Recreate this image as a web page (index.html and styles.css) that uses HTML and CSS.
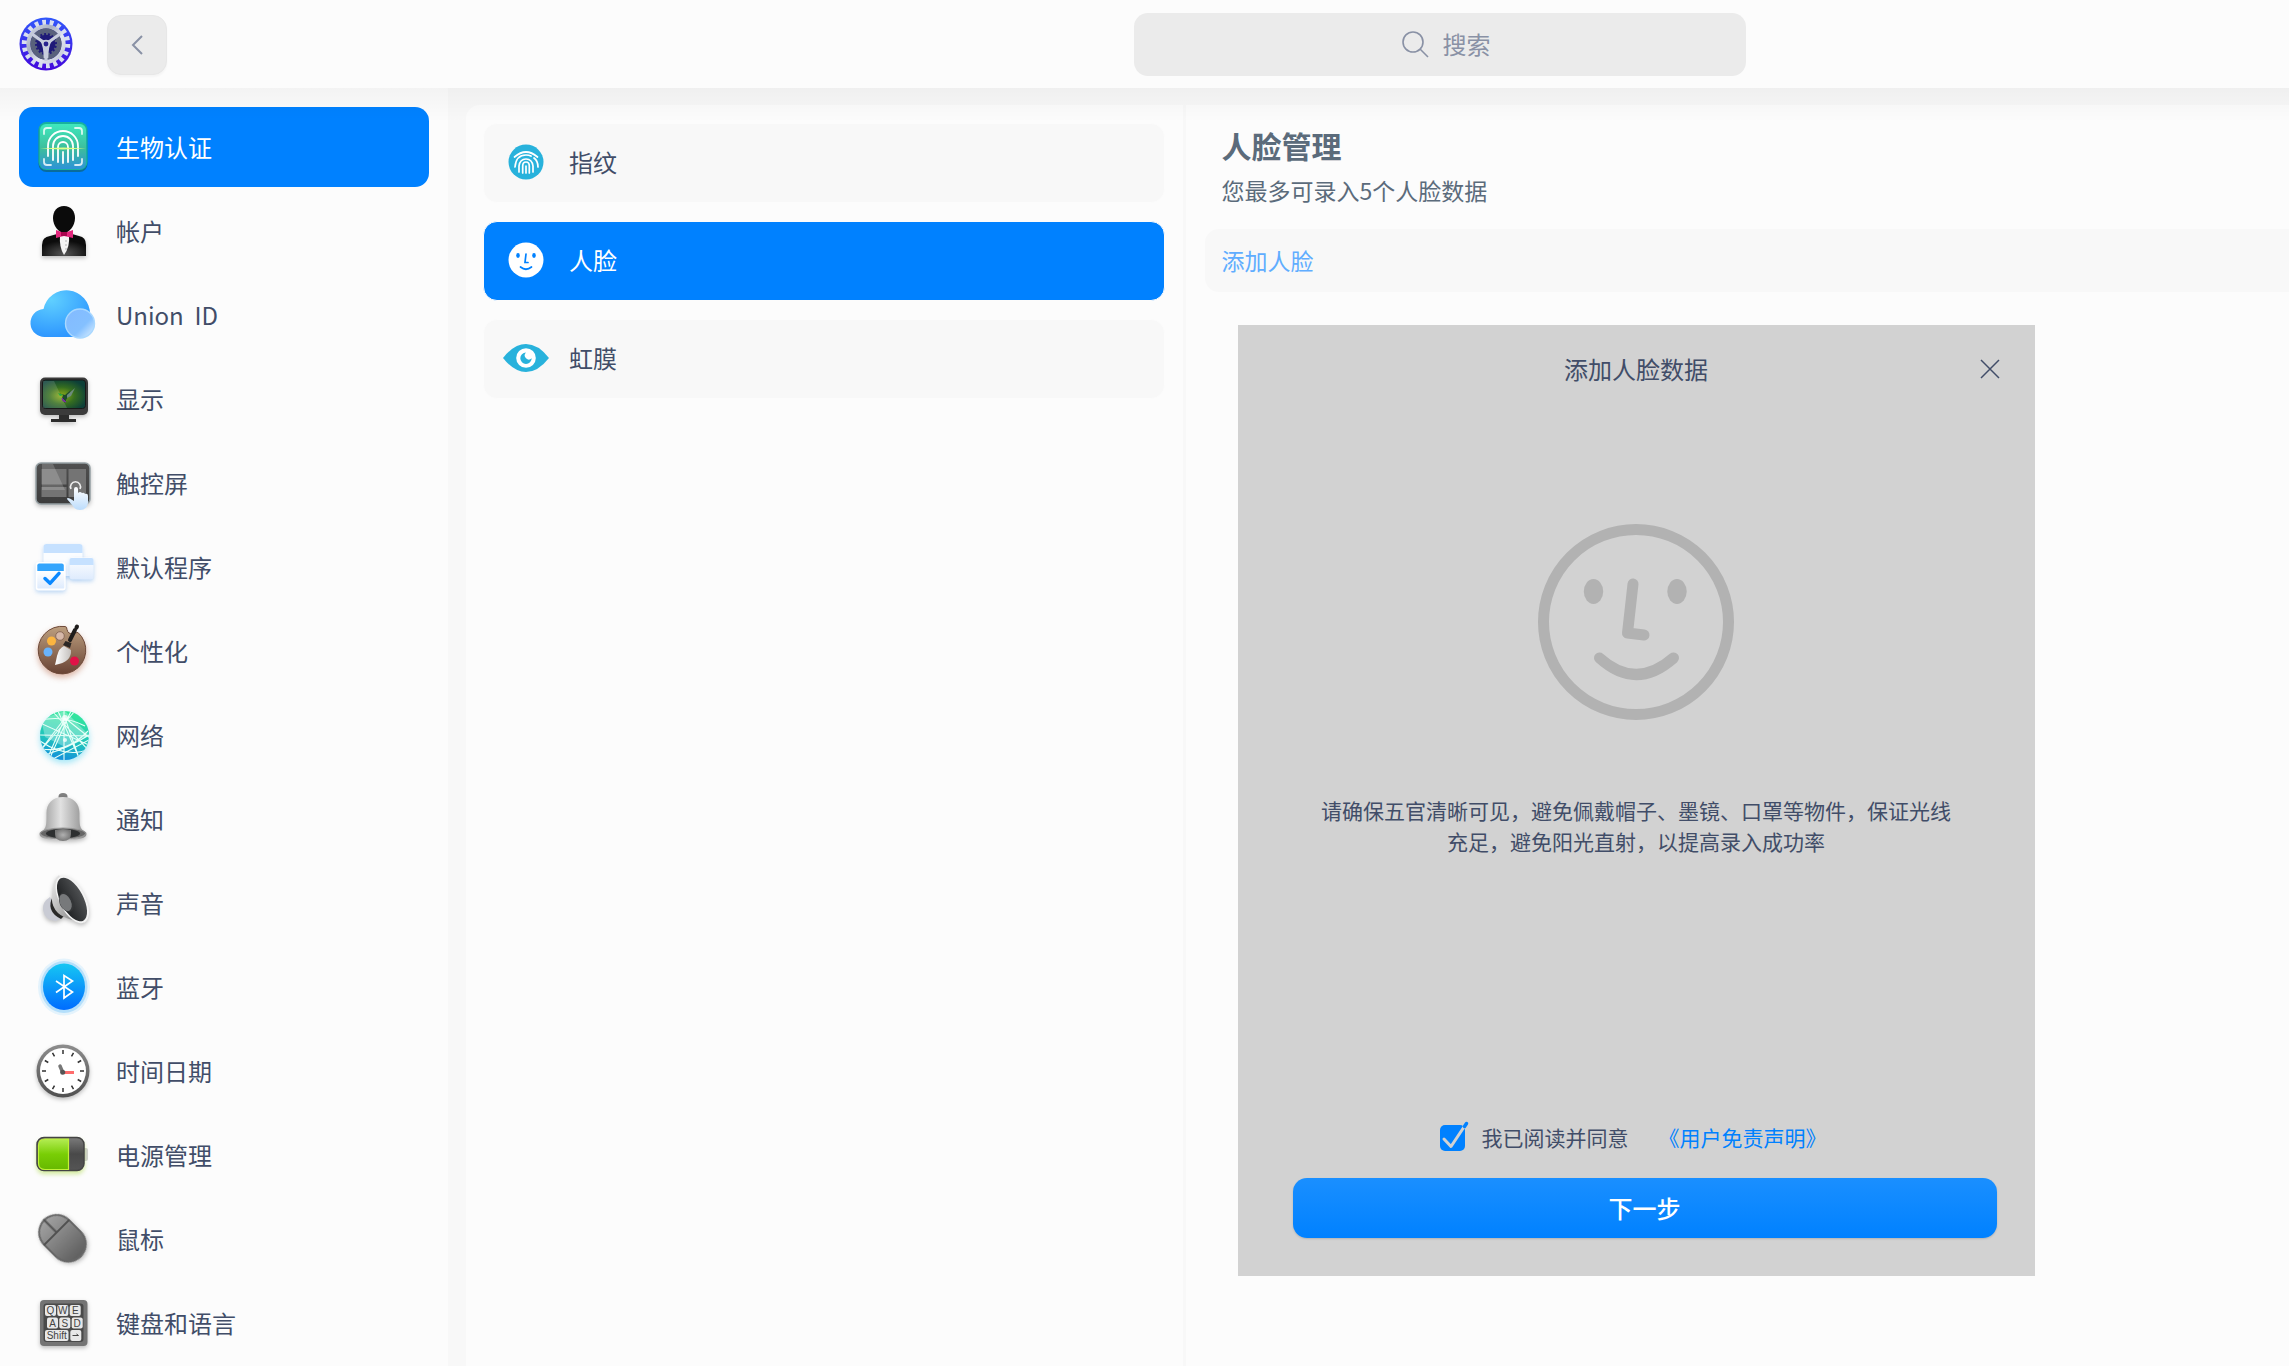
FILE: index.html
```
<!DOCTYPE html>
<html lang="zh-CN">
<head>
    <meta charset="UTF-8">
    <meta name="viewport" content="width=device-width, initial-scale=1.0">
    <title>控制中心</title>
    <link rel="stylesheet" href="styles.css">
</head>
<body>
    <header class="topbar">
        <svg class="logo" viewBox="0 0 56 56" aria-hidden="true">
            <defs>
                <linearGradient id="logoBg" x1="0" y1="0" x2="0" y2="1"><stop offset="0" stop-color="#3158fb"/><stop offset="1" stop-color="#4408dc"/></linearGradient>
                <linearGradient id="gear" x1="0" y1="0" x2="1" y2="1"><stop offset="0" stop-color="#dfe4f0"/><stop offset=".35" stop-color="#a9b0c2"/><stop offset=".6" stop-color="#e3e6f2"/><stop offset="1" stop-color="#b9bfd2"/></linearGradient>
            </defs>
            <circle cx="28" cy="28" r="26.5" fill="url(#logoBg)"/>
            <circle cx="28" cy="28" r="21.5" fill="none" stroke="#d9def0" stroke-width="5.5" pathLength="180" stroke-dasharray="5 5"/>
            <circle cx="28" cy="28" r="19.7" fill="url(#gear)"/>
            <circle cx="28" cy="28" r="15.5" fill="#1f1a78"/>
            <circle cx="28" cy="28" r="13.2" fill="none" stroke="#59617c" stroke-width="4.5"/>
            <circle cx="28" cy="28" r="10.5" fill="none" stroke="#59617c" stroke-width="2.5" pathLength="160" stroke-dasharray="5 5"/>
            <path d="M28 28 V45 M28 28 L14 18 M28 28 L42 18" stroke="#c8cddd" stroke-width="3.2"/>
            <path d="M22.500 25.500 Q28 22 33.500 25.500 Q30.500 30 30.300 42 H25.700 Q25.500 30 22.500 25.500Z" fill="#c8cddd"/>
            <circle cx="28" cy="28" r="2.4" fill="#2a2390"/>
        </svg>
        <button class="back" type="button" aria-label="返回">
            <svg width="12" height="20" viewBox="0 0 12 20"><path d="M11 1 L2 10 L11 19" fill="none" stroke="#8991a5" stroke-width="2"/></svg>
        </button>
        <label class="search">
            <svg width="27" height="27" viewBox="0 0 27 27" aria-hidden="true"><g fill="none" stroke="#8991a5" stroke-width="1.6"><circle cx="11" cy="11" r="10"/><path d="M18 18 L26 26"/></g></svg>
            <input type="text" placeholder="搜索" aria-label="搜索">
        </label>
    </header>

    <div class="layout">
        <nav class="sidebar">
            <a class="active" href="#biometric">
                <svg viewBox="0 0 64 64">
                    <defs><linearGradient id="bio" x1="0" y1="0" x2="0" y2="1"><stop offset="0" stop-color="#3fe8bd"/><stop offset=".55" stop-color="#3dbd9c"/><stop offset="1" stop-color="#2d92d8"/></linearGradient></defs>
                    <rect x="7.500" y="8" width="49" height="49" rx="8" fill="#0a6c9c"/>
                    <rect x="7.500" y="7" width="49" height="48" rx="8" fill="#18b29d"/>
                    <rect x="9" y="9" width="46" height="45" rx="6" fill="url(#bio)"/>
                    <g fill="none" stroke="#fff" stroke-width="1.8" stroke-linecap="round">
                        <path d="M13 19v-3q0-3 3-3h4M44 13h4q3 0 3 3v3M13 44v3q0 3 3 3h4M44 50h4q3 0 3-3v-3" stroke-opacity=".8"/>
                        <path d="M17 41V31a15 15 0 0 1 30 0v10M22 45V31a10 10 0 0 1 20 0v14M27 47V32a5 5 0 0 1 10 0v15M32 37v11"/>
                    </g>
                    <path d="M9 33.500 L32 32.500 L55 33.500 L32 34.500Z" fill="#dcff8a"/>
                </svg>
                生物认证
            </a>
            <a href="#account">
                <svg viewBox="0 0 64 64">
                    <defs><radialGradient id="suit" cx=".5" cy=".9" r=".6"><stop offset="0" stop-color="#555"/><stop offset="1" stop-color="#0c0c0c"/></radialGradient></defs>
                    <path class="drop" d="M11 57V46q0-8 8-9l7-2h15l7 2q7 1 7 9v11Z" fill="url(#suit)"/>
                    <path d="M29 37h9q1 11-5 19-5-8-4-19Z" fill="#f4f4f4"/>
                    <g fill="#aaa"><circle cx="35" cy="42" r=".8"/><circle cx="35" cy="46" r=".8"/><circle cx="35" cy="50" r=".8"/></g>
                    <path d="M33 7c7 0 11 5 11 12 0 8-6 15-11 15s-11-7-11-15c0-7 4-12 11-12Z" fill="#0b0b0b"/>
                    <path d="M25 31l8 3 9-3v8l-9-2-8 2Z" fill="#e3277d"/><path d="M30 33h6v4h-6Z" fill="#a8064e"/>
                </svg>
                帐户
            </a>
            <a href="#union">
                <svg viewBox="0 0 64 64">
                    <defs>
                        <radialGradient id="cloud" cx=".35" cy=".2" r=".8"><stop offset="0" stop-color="#60d0ff"/><stop offset="1" stop-color="#2e97ff"/></radialGradient>
                        <linearGradient id="bubble" x1="0" y1="0" x2="1" y2="1"><stop offset="0" stop-color="#83baff"/><stop offset=".6" stop-color="#84c0ff"/><stop offset="1" stop-color="#e4f3ff"/></linearGradient>
                    </defs>
                    <path d="M14.500 54a14 14 0 0 1-2-28A23.500 23.500 0 0 1 59 31v12Q58 54 44 54Z" fill="url(#cloud)"/>
                    <circle cx="49" cy="40.500" r="14.500" fill="url(#bubble)" stroke="#a9d8ff" stroke-width="1.400"/>
                </svg>
                Union &nbsp;ID
            </a>
            <a href="#display">
                <svg viewBox="0 0 64 64">
                    <defs><radialGradient id="screen" cx=".45" cy=".55" r=".6"><stop offset="0" stop-color="#8fae18"/><stop offset=".5" stop-color="#356d20"/><stop offset="1" stop-color="#0d4038"/></radialGradient></defs>
                    <g class="drop">
                        <path d="M28 46h10v6h7v3H20v-3h8Z" fill="#2d2d2d"/>
                        <rect x="9" y="10.500" width="48" height="37.500" rx="5" fill="#3b3b3b"/>
                    </g>
                    <rect x="11.500" y="13" width="43" height="28.500" rx="3" fill="url(#screen)" stroke="#181818"/>
                    <path d="M12 14h11l13 27H12Z" fill="#fff" fill-opacity=".14"/>
                    <path d="M27 26l7 2 6-5-3 7-2 3-1 3-3-4 1-4Z" fill="#1d4a2e"/><path d="M36 28l8-7-4 8-4 2Z" fill="#6d8b7d"/><path d="M31 31l4 4-3-1Z" fill="#753199" stroke="#753199"/>
                    <path d="M27 26l5 2-3 1Z" fill="#1eae42"/>
                </svg>
                显示
            </a>
            <a href="#touch">
                <svg viewBox="0 0 64 64">
                    <defs>
                        <linearGradient id="pad" x1="0" y1="0" x2="0" y2="1"><stop offset="0" stop-color="#505050"/><stop offset="1" stop-color="#3c3c3c"/></linearGradient>
                        <linearGradient id="hand" x1="0" y1="0" x2="0" y2="1"><stop offset="0" stop-color="#fff"/><stop offset="1" stop-color="#bcdcfc"/></linearGradient>
                    </defs>
                    <rect class="drop" x="5" y="12" width="54" height="41" rx="5" fill="url(#pad)" stroke="#95a0a4" stroke-width="1.500"/>
                    <g fill="#747474"><rect x="10.500" y="18" width="25" height="15.500"/><rect x="10.500" y="36" width="25" height="10"/><rect x="37.500" y="18" width="17.500" height="28"/></g>
                    <path d="M11 13h11l12 26H11Z" fill="#fff" fill-opacity=".18"/>
                    <path d="M40 38a5 5 0 1 1 9 0" fill="none" stroke="#eee" stroke-width="1.600"/>
                    <path d="M43 50V38q0-2 2-2t2 2v4q2-2 4 0 2-1 3 1 3-1 3 2v7q-1 7-8 7-5 0-7-4l-6-7q0-3 7 2Z" fill="url(#hand)"/>
                </svg>
                触控屏
            </a>
            <a href="#default">
                <svg viewBox="0 0 64 64">
                    <defs><linearGradient id="win" x1="0" y1="0" x2="0" y2="1"><stop offset="0" stop-color="#fff"/><stop offset="1" stop-color="#deebfd"/></linearGradient></defs>
                    <g class="glow-blue"><rect x="12.500" y="9" width="39" height="32" rx="3" fill="#fbfdff"/></g>
                    <path d="M12.500 18v-6q0-3 3-3h33q3 0 3 3v6Z" fill="#c6e1ff"/>
                    <rect class="glow-blue" x="38.500" y="22.500" width="24" height="22" rx="3" fill="url(#win)"/>
                    <path d="M38.500 30v-5q0-2 2-2h20q2 0 2 2v5Z" fill="#c6e1ff"/>
                    <rect class="glow-blue" x="4.700" y="27" width="30" height="28.500" rx="3" fill="#fff"/>
                    <rect x="6.300" y="36" width="27" height="17.500" rx="1" fill="url(#win)"/>
                    <path d="M6.300 36v-5.500q0-2 2-2h22.500q2 0 2 2V36Z" fill="#34a5fd"/>
                    <path d="M14 43.500l5 4.800 9-10" fill="none" stroke="#0a88ff" stroke-width="3.500" stroke-linecap="round" stroke-linejoin="round"/>
                </svg>
                默认程序
            </a>
            <a href="#personal">
                <svg viewBox="0 0 64 64">
                    <defs>
                        <linearGradient id="wood" x1="0" y1="0" x2="0" y2="1"><stop offset="0" stop-color="#bd9f7f"/><stop offset="1" stop-color="#694334"/></linearGradient>
                        <linearGradient id="hair" x1="0" y1="0" x2="1" y2="0"><stop offset="0" stop-color="#fff"/><stop offset="1" stop-color="#c4c0bd"/></linearGradient>
                    </defs>
                    <path class="glow-brown" d="M34 7.500q2 0 2 3 1 5 6 4 3-1 5-1a23.800 23.800 0 1 1-13-6Z" fill="url(#wood)" stroke="#6e4a39"/>
                    <circle cx="29" cy="17" r="4.300" fill="#d6b8a9" stroke="#8b6b5a"/>
                    <circle cx="20.500" cy="22" r="4.500" fill="#fbb540"/><circle cx="17" cy="33" r="4.500" fill="#69b3fb"/><circle cx="43.500" cy="42" r="4.500" fill="#e01247"/>
                    <path d="M33 27l7 4q1 12-16 15 1-4 2-9 2-8 7-10Z" fill="url(#hair)"/>
                    <path d="M34.500 22l6 2-1.500 5-7-3Z" fill="#2b2725"/>
                    <path d="M39 21l5-10M45.500 8.500l.5-1" stroke="#1f1d1c" stroke-width="4" stroke-linecap="round"/>
                </svg>
                个性化
            </a>
            <a href="#network">
                <svg viewBox="0 0 64 64">
                    <defs>
                        <linearGradient id="net" x1=".6" y1="0" x2=".4" y2="1"><stop offset="0" stop-color="#33e999"/><stop offset=".6" stop-color="#20c3bd"/><stop offset="1" stop-color="#128edb"/></linearGradient>
                        <clipPath id="netClip"><circle cx="33.500" cy="32.500" r="24.500"/></clipPath>
                    </defs>
                    <circle class="glow-cyan" cx="33.500" cy="32.500" r="24.500" fill="url(#net)"/>
                    <g clip-path="url(#netClip)">
                        <path d="M10 16L34 8l24 24-24 12L14 34Z" fill="#fff" fill-opacity=".3"/>
                        <g fill="none" stroke="#e7fff8" stroke-width="1.100">
                            <path d="M33 6v54M34 15L17 54M34 15l14 40M34 15L9 48M34 15l25 20M40 8L18 57M27 8l22 49M9 32l49 1M9 20l49 22M22 9l37 40M9 17q25-5 45 6M11 46q25 4 46-18M14 52q25-8 44-20M9 38q27 18 49 8M44 8L10 47M58 37L20 57"/>
                        </g>
                        <circle cx="34" cy="15" r="3" fill="#fff" fill-opacity=".8"/><circle cx="34" cy="37" r="2" fill="#fff" fill-opacity=".8"/>
                    </g>
                </svg>
                网络
            </a>
            <a href="#notify">
                <svg viewBox="0 0 64 64">
                    <defs>
                        <linearGradient id="bell" x1="0" y1="0" x2="1" y2="0"><stop offset="0" stop-color="#929292"/><stop offset=".45" stop-color="#e1e1e1"/><stop offset="1" stop-color="#898989"/></linearGradient>
                        <radialGradient id="clap"><stop offset="0" stop-color="#b0b0b0"/><stop offset="1" stop-color="#787878"/></radialGradient>
                    </defs>
                    <ellipse cx="32" cy="9.500" rx="4.500" ry="3.500" fill="#818181"/>
                    <path class="drop" d="M32 10c11 0 16.500 7 16.500 16 0 10 0 14 3 17 3 2 4 2 4 4 0 4-7 6-23.500 6S8.500 51 8.500 47c0-2 1-2 4-4 3-3 3-7 3-17 0-9 5.500-16 16.500-16Z" fill="url(#bell)"/>
                    <ellipse cx="32" cy="46.500" rx="22.500" ry="5.500" fill="#666" stroke="#999"/>
                    <ellipse cx="32" cy="46.500" rx="17" ry="4.500" fill="#2d2f30"/>
                    <path d="M24 43q8-2 16 0v4q0 7-8 7t-8-7Z" fill="url(#clap)"/>
                </svg>
                通知
            </a>
            <a href="#sound">
                <svg viewBox="0 0 64 64">
                    <defs>
                        <linearGradient id="horn" x1="0" y1="0" x2="1" y2="1"><stop offset="0" stop-color="#eee"/><stop offset="1" stop-color="#777"/></linearGradient>
                        <linearGradient id="cone" x1="0" y1="0" x2="1" y2="0"><stop offset="0" stop-color="#1f2123"/><stop offset="1" stop-color="#4e5052"/></linearGradient>
                    </defs>
                    <g class="drop">
                        <path d="M19 26q-8 5-7 13 2 11 13 11l6-3Z" fill="#c9cbd4"/>
                        <path d="M22 25q-8 15 8 23l3-3-8-20Z" fill="#292929"/>
                        <path d="M28 4q-6 4-7 19-2 19 17 25l15 4Z" fill="url(#horn)"/>
                        <ellipse cx="41.300" cy="28.500" rx="13" ry="26" transform="rotate(-28 41.300 28.500)" fill="#f3f3f3"/>
                    </g>
                    <ellipse cx="41" cy="28.500" rx="11.300" ry="24" transform="rotate(-28 41 28.500)" fill="url(#cone)"/>
                    <ellipse cx="35.500" cy="31" rx="7" ry="10.500" transform="rotate(-25 35.500 31)" fill="#343638"/>
                    <ellipse cx="34.500" cy="31.500" rx="5.500" ry="9" transform="rotate(-25 34.500 31.500)" fill="#77797b"/>
                </svg>
                声音
            </a>
            <a href="#bluetooth">
                <svg viewBox="0 0 64 64">
                    <defs><linearGradient id="bt" x1="0" y1="0" x2="0" y2="1"><stop offset="0" stop-color="#16c7f3"/><stop offset="1" stop-color="#006cff"/></linearGradient></defs>
                    <ellipse cx="33" cy="32" rx="26" ry="28.500" fill="#e4f3fc"/><ellipse cx="33" cy="32" rx="23.500" ry="26" fill="#b4dffb"/>
                    <ellipse cx="33" cy="31.700" rx="21" ry="23.300" fill="url(#bt)"/>
                    <path d="M25 26l16.500 11-8.500 6V20.500l8.500 5.500L25 37.500" fill="none" stroke="#fff" stroke-width="1.700"/>
                </svg>
                蓝牙
            </a>
            <a href="#time">
                <svg viewBox="0 0 64 64">
                    <defs><linearGradient id="ring" x1="0" y1="0" x2="0" y2="1"><stop offset="0" stop-color="#8d8d8d"/><stop offset="1" stop-color="#505050"/></linearGradient></defs>
                    <circle class="drop" cx="32" cy="32" r="26.500" fill="url(#ring)"/>
                    <circle cx="32" cy="32" r="23" fill="#fff"/>
                    <g stroke="#333" stroke-width="1.500">
                        <path id="tick" d="M32 11v4M32 49v4M11 32h4M49 32h4"/>
                        <use href="#tick" transform="rotate(30 32 32)"/><use href="#tick" transform="rotate(60 32 32)"/>
                    </g>
                    <path d="M32 33.500h11" stroke="#ff6c6c" stroke-width="3"/><path d="M31.500 33l-2.500-6" stroke="#777" stroke-width="3.500" stroke-linecap="round"/><circle cx="31.700" cy="33.300" r="2.500" fill="#555"/>
                </svg>
                时间日期
            </a>
            <a href="#power">
                <svg viewBox="0 0 64 64">
                    <defs>
                        <linearGradient id="green" x1="0" y1="0" x2="0" y2="1"><stop offset="0" stop-color="#b3ec53"/><stop offset=".5" stop-color="#79ce05"/><stop offset="1" stop-color="#67b800"/></linearGradient>
                        <linearGradient id="cell" x1="0" y1="0" x2="0" y2="1"><stop offset="0" stop-color="#7b7b7b"/><stop offset=".5" stop-color="#494949"/><stop offset="1" stop-color="#555"/></linearGradient>
                    </defs>
                    <rect x="50" y="25" width="7" height="13" rx="2" fill="#d1d1d1"/>
                    <rect class="glow-green" x="6" y="14.500" width="47" height="33" rx="7" fill="url(#cell)" stroke="#444" stroke-width="1.500"/>
                    <path d="M37.500 16H14q-6.500 0-6.500 6.500V40q0 6.500 6.500 6.500h23.500Z" fill="url(#green)" stroke="#c2f338" stroke-width="1.200"/>
                </svg>
                电源管理
            </a>
            <a href="#mouse">
                <svg viewBox="0 0 64 64">
                    <defs><linearGradient id="mouse" x1="0" y1="0" x2="0" y2="1"><stop offset="0" stop-color="#a0a0a0"/><stop offset="1" stop-color="#606060"/></linearGradient></defs>
                    <g class="drop" transform="rotate(-45 31.500 31.300)">
                        <rect x="13" y="4.500" width="37" height="53.500" rx="18.500" fill="#666"/>
                        <rect x="15" y="6.500" width="33" height="49" rx="16.500" fill="url(#mouse)"/>
                        <path d="M13.500 23h36M31.500 4.500V23" stroke="#505050" stroke-width="2"/>
                    </g>
                </svg>
                鼠标
            </a>
            <a href="#keyboard">
                <svg viewBox="0 0 64 64">
                    <rect class="drop" x="9" y="9" width="47.500" height="46" rx="4" fill="#747474"/>
                    <rect x="12.500" y="12.500" width="40" height="38.500" rx="3" fill="#4a4a4a"/>
                    <g fill="#e8e8e8">
                        <rect x="14" y="14" width="11" height="11" rx="2"/><rect x="26.300" y="14" width="11" height="11" rx="2"/><rect x="38.700" y="14" width="11" height="11" rx="2"/>
                        <rect x="16" y="26.500" width="11" height="11" rx="2"/><rect x="28.300" y="26.500" width="11" height="11" rx="2"/><rect x="40.700" y="26.500" width="11" height="11" rx="2"/>
                        <rect x="14" y="39" width="23.500" height="11" rx="2"/><rect x="39.300" y="39" width="11" height="11" rx="2"/>
                    </g>
                    <g class="keys"><text x="19.500" y="23">Q</text><text x="31.800" y="23">W</text><text x="44.300" y="23">E</text><text x="21.500" y="35.500">A</text><text x="33.800" y="35.500">S</text><text x="46.200" y="35.500">D</text><text x="25.700" y="48">Shift</text></g>
                    <path d="M41.500 44.500h6l-2-1.500" fill="none" stroke="#444"/>
                </svg>
                键盘和语言
            </a>
        </nav>

        <main class="panel">
            <nav class="methods">
                <a href="#finger">
                    <svg viewBox="0 0 46 46">
                        <circle cx="23" cy="23" r="17.500" fill="#28b2dc"/>
                        <g fill="none" stroke="#fff" stroke-width="1.700" stroke-linecap="round">
                            <path d="M11.500 18q11.500-10 23 0M12 28q1-12 11-12 3 0 5 1M31 19q4 3 4 9M16 33v-6q1-7 7-7t7 7v6M19.700 34v-7q0-4 3.300-4t3.300 4v7M23 27v7"/>
                        </g>
                    </svg>
                    指纹
                </a>
                <a class="active" href="#face">
                    <svg viewBox="0 0 46 46">
                        <circle cx="23" cy="23" r="17.500" fill="#fff"/>
                        <g fill="#0081ff"><ellipse cx="15" cy="18.500" rx="1.800" ry="2.400"/><ellipse cx="31" cy="18.500" rx="1.800" ry="2.400"/></g>
                        <path d="M23 17l-1 8.500h3M17.500 30q5.500 4.500 11 0" fill="none" stroke="#0081ff" stroke-width="1.700" stroke-linecap="round"/>
                    </svg>
                    人脸
                </a>
                <a href="#iris">
                    <svg viewBox="0 0 46 46">
                        <path d="M0 23Q11 9 23 9t23 14Q35 37 23 37T0 23Z" fill="#28b2dc"/>
                        <circle cx="23" cy="23" r="9.800" fill="#fff"/>
                        <path d="M23 17.500a5.700 5.700 0 1 0 5.700 5.700 3.700 3.700 0 0 1-5.700-5.700Z" fill="#28b2dc"/>
                    </svg>
                    虹膜
                </a>
            </nav>

            <section class="detail">
                <h1>人脸管理</h1>
                <p class="hint">您最多可录入5个人脸数据</p>
                <button class="add" type="button">添加人脸</button>

                <form class="dialog">
                    <div class="dialog-head">
                        <h2>添加人脸数据</h2>
                        <button class="close" type="button" aria-label="关闭">
                            <svg width="20" height="20" viewBox="0 0 20 20"><path d="M1 1 L19 19 M19 1 L1 19" stroke="#414d68" stroke-width="1.500"/></svg>
                        </button>
                    </div>
                    <svg class="face" viewBox="0 0 196 196" aria-hidden="true">
                        <g fill="none" stroke="#b2b2b2" stroke-width="11" stroke-linecap="round" stroke-linejoin="round">
                            <circle cx="98" cy="98" r="92.500"/>
                            <path d="M95 60 L89.500 109 L106 111"/>
                            <path d="M61.500 134 Q98 167 135.500 134"/>
                        </g>
                        <g fill="#b2b2b2"><ellipse cx="55.500" cy="67.500" rx="9.700" ry="12.500"/><ellipse cx="139" cy="67.500" rx="9.700" ry="12.500"/></g>
                    </svg>
                    <p class="tips">请确保五官清晰可见，避免佩戴帽子、墨镜、口罩等物件，保证光线充足，避免阳光直射，以提高录入成功率</p>
                    <div class="agree">
                        <label>
                            <span class="check">
                                <input type="checkbox" checked>
                                <svg width="30" height="32" viewBox="0 0 30 32" aria-hidden="true">
                                    <rect x="0" y="4" width="25" height="26" rx="5" fill="#0081ff"/>
                                    <path d="M4 18 L11 25.500 L24 6" fill="none" stroke="#d2d2d2" stroke-width="3" stroke-linecap="round" stroke-linejoin="round"/>
                                    <path d="M24.500 5.500 L26.500 2.500" stroke="#0081ff" stroke-width="3.500" stroke-linecap="round"/>
                                </svg>
                            </span>
                            我已阅读并同意
                        </label>
                        <a href="#disclaimer">《用户免责声明》</a>
                    </div>
                    <button class="next" type="button">下一步</button>
                </form>
            </section>
        </main>
    </div>
</body>
</html>
```
FILE: styles.css
```
* {
    margin: 0;
    padding: 0;
    box-sizing: border-box;
}

body {
    min-height: 100vh;
    display: flex;
    flex-direction: column;
    font-family: "Noto Sans CJK SC", sans-serif;
    font-size: 24px;
    line-height: 40px;
    color: #414d68;
    background-color: #fcfcfc;
}

a {
    color: inherit;
    text-decoration: none;
}

button,
input {
    font: inherit;
    border: none;
    background: none;
}

svg {
    display: block;
    flex-shrink: 0;
}

/* Top bar */
.topbar {
    position: relative;
    height: 88px;
    padding-left: 18px;
    display: grid;
    grid-template-columns: 56px 60px 35fr minmax(300px, 612px) 19fr;
    align-items: center;
}

.topbar::after {
    content: "";
    position: absolute;
    z-index: 1;
    top: 100%;
    left: 0;
    right: 0;
    height: 34px;
    background: linear-gradient(rgba(0, 0, 0, 0.035), rgba(0, 0, 0, 0));
    pointer-events: none;
}

.logo {
    width: 56px;
    height: 56px;
}

.back {
    width: 60px;
    height: 60px;
    margin: 2px 0 0 33px;
    display: grid;
    place-items: center;
    border: 1px solid #e7e7e7;
    border-radius: 14px;
    background-color: #ebebeb;
    box-shadow: 0 2px 2px rgba(0, 0, 0, 0.03);
}

.search {
    grid-column: 4;
    height: 63px;
    padding-left: 16px;
    display: flex;
    align-items: center;
    justify-content: center;
    gap: 14px;
    border-radius: 14px;
    background-color: #ebebeb;
}

.search input {
    width: 52px;
    outline: none;
}

.search input::placeholder {
    color: #8991a5;
    opacity: 1;
}

/* Sidebar */
.layout {
    flex: 1;
    display: grid;
    grid-template-columns: 448px minmax(0, 1fr);
    background-color: #f8f8f8;
}

.sidebar {
    padding: 19px 19px 0;
    display: flex;
    flex-direction: column;
    gap: 4px;
    background-color: #fcfcfc;
}

.sidebar a {
    height: 80px;
    padding-left: 12px;
    display: flex;
    align-items: center;
    gap: 21px;
    border-radius: 14px;
}

.sidebar svg {
    width: 64px;
    height: 64px;
    overflow: visible;
}

.drop {
    filter: drop-shadow(0 2px 2px rgba(0, 0, 0, 0.25));
}

.glow-blue {
    filter: drop-shadow(0 2px 2px rgba(40, 130, 230, 0.3));
}

.glow-brown {
    filter: drop-shadow(0 3px 3px rgba(170, 70, 30, 0.4));
}

.glow-cyan {
    filter: drop-shadow(0 3px 3px rgba(30, 200, 240, 0.4));
}

.glow-green {
    filter: drop-shadow(0 3px 2px rgba(150, 210, 20, 0.4));
}

.keys {
    font-family: "Liberation Sans", sans-serif;
    font-size: 10px;
    fill: #444444;
    text-anchor: middle;
}

/* Content */
.panel {
    margin: 17px 0 0 18px;
    display: grid;
    grid-template-columns: minmax(0, 15fr) minmax(0, 23fr);
    border-radius: 14px 0 0 0;
    background-color: #fcfcfc;
}

.methods {
    padding: 18px 18px 0 17px;
    display: flex;
    flex-direction: column;
    gap: 18px;
    border-right: 3px solid #f8f8f8;
}

.methods a {
    height: 80px;
    padding: 0 19px 2px;
    display: flex;
    align-items: center;
    gap: 20px;
    border: 1px solid #fcfcfc;
    border-radius: 14px;
    background-color: #f8f8f8;
}

.methods svg {
    width: 46px;
    height: 46px;
}

.sidebar .active,
.methods .active {
    color: #ffffff;
    background-color: #0081ff;
}

.detail {
    padding: 20px 0 40px 19px;
    color: #5b6b7b;
}

.detail h1 {
    padding-left: 17px;
    font-size: 30px;
    font-weight: 700;
}

.hint {
    margin-top: 10px;
    padding-left: 17px;
    font-size: 23px;
    line-height: 30px;
}

.add {
    width: 100%;
    margin-top: 24px;
    padding: 16px 17px;
    display: block;
    border-radius: 14px 0 0 14px;
    background-color: #f8f8f8;
    color: #60adff;
    font-size: 23px;
    line-height: 31px;
    text-align: left;
}

/* Dialog */
.dialog {
    max-width: 797px;
    min-height: 951px;
    margin: 33px 33px 0;
    padding: 24px 0 38px;
    display: flex;
    flex-direction: column;
    background-color: #d2d2d2;
    color: #414d68;
}

.dialog-head {
    padding: 0 35px;
    display: grid;
    grid-template-columns: 1fr auto 1fr;
    align-items: center;
}

.dialog-head h2 {
    grid-column: 2;
    font-size: 24px;
    font-weight: 400;
}

.close {
    justify-self: end;
}

.face {
    width: 196px;
    height: 196px;
    margin: 135px auto 0;
}

.tips {
    margin-top: 75px;
    padding: 0 78px;
    font-size: 21px;
    line-height: 31px;
    text-align: center;
}

.agree {
    margin-top: auto;
    padding-right: 6px;
    display: flex;
    justify-content: center;
    gap: 30px;
    font-size: 21px;
    line-height: 32px;
}

.agree label {
    display: flex;
    gap: 12px;
}

.agree a {
    color: #0081ff;
}

.check {
    position: relative;
}

.check input {
    position: absolute;
    inset: 0;
    opacity: 0;
}

.next {
    height: 60px;
    margin: 25px 38px 0 55px;
    border-radius: 14px;
    background: linear-gradient(#1a8fff, #0081ff);
    box-shadow: 0 1px 2px rgba(0, 0, 0, 0.15);
    color: #ffffff;
    font-weight: 500;
}
```
